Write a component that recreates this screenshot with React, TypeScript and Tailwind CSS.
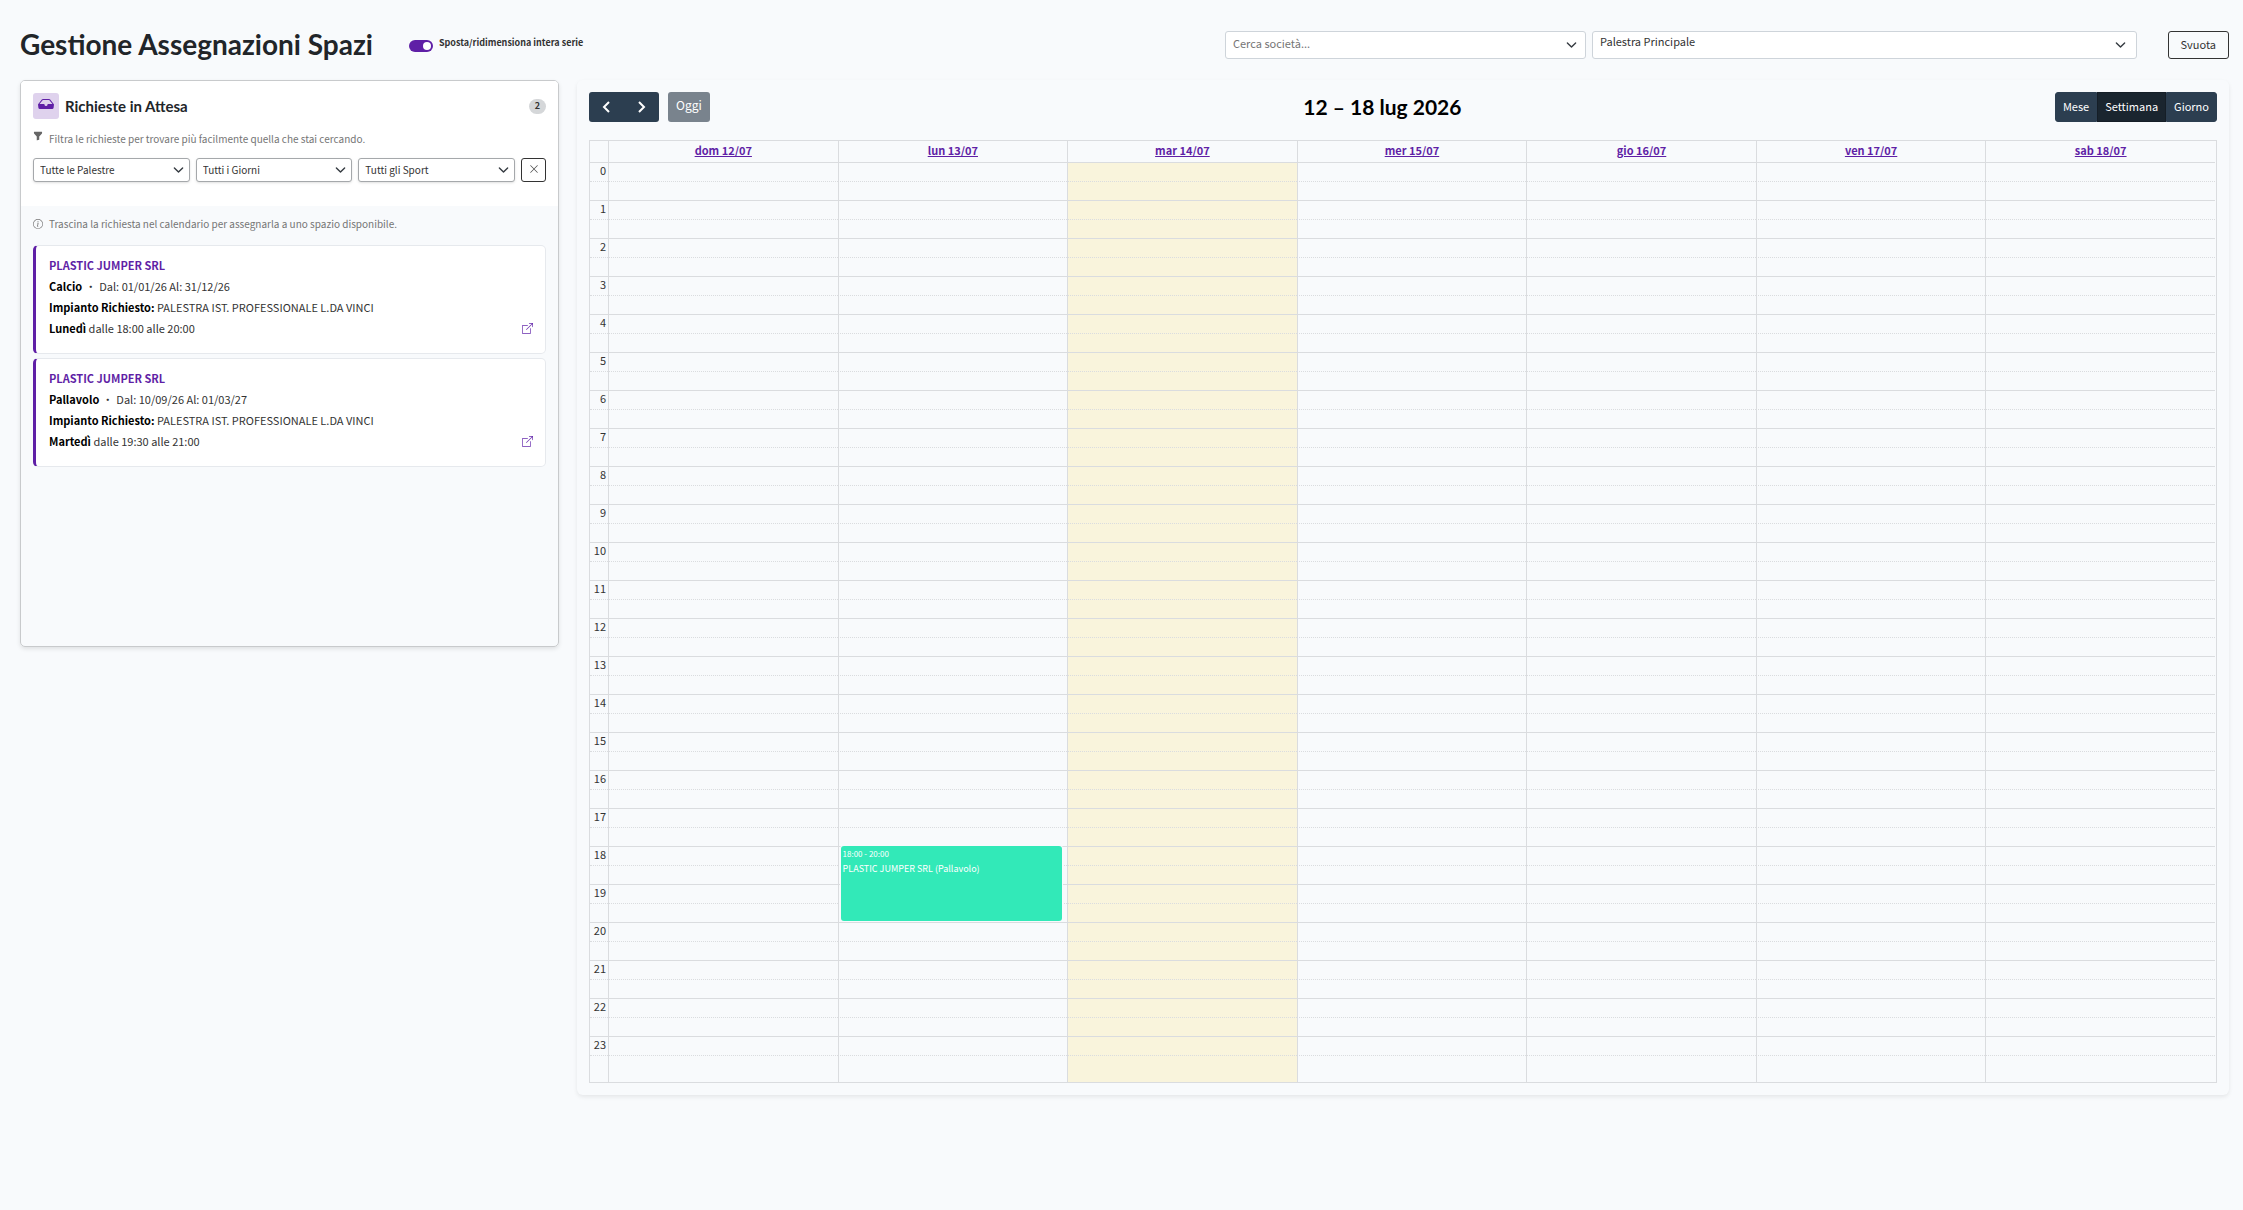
import { useState } from "react";
import {
  BsBoxArrowUpRight,
  BsFunnelFill,
  BsInboxFill,
  BsInfoCircle,
  BsXLg,
} from "react-icons/bs";
import clsx from "clsx";

const DAYS = [
  { label: "dom 12/07" },
  { label: "lun 13/07" },
  { label: "mar 14/07", today: true },
  { label: "mer 15/07" },
  { label: "gio 16/07" },
  { label: "ven 17/07" },
  { label: "sab 18/07" },
];

const SLOTS = Array.from({ length: 48 }, (_, i) => i);
const SLOT_HEIGHT = 19;

const EVENTS = [
  { id: 1, day: 1, slot: 36, slots: 4, time: "18:00 - 20:00", title: "PLASTIC JUMPER SRL (Pallavolo)" },
];

const REQUESTS = [
  {
    id: 1,
    club: "PLASTIC JUMPER SRL",
    sport: "Calcio",
    from: "01/01/26",
    to: "31/12/26",
    venue: "PALESTRA IST. PROFESSIONALE L.DA VINCI",
    day: "Lunedì",
    hours: "dalle 18:00 alle 20:00",
  },
  {
    id: 2,
    club: "PLASTIC JUMPER SRL",
    sport: "Pallavolo",
    from: "10/09/26",
    to: "01/03/27",
    venue: "PALESTRA IST. PROFESSIONALE L.DA VINCI",
    day: "Martedì",
    hours: "dalle 19:30 alle 21:00",
  },
];

const VIEWS = ["Mese", "Settimana", "Giorno"];

export default function App() {
  const [moveSeries, setMoveSeries] = useState(true);
  const [view, setView] = useState("Settimana");

  return (
    <div className="min-h-screen bg-slate-50 pt-[31px] pr-3.5 pb-8 pl-5 font-['Noto_Sans_CJK_SC',sans-serif] text-[#333]">
      <header className="flex h-7 items-center">
        <h1 className="pb-0.5 font-['Lato',sans-serif] text-[28px] leading-7 font-bold text-[#212529]">
          Gestione Assegnazioni Spazi
        </h1>
        <label className="ml-9 flex cursor-pointer items-center gap-1.5 text-[9px] leading-4 font-bold">
          <input
            type="checkbox"
            role="switch"
            checked={moveSeries}
            onChange={(e) => setMoveSeries(e.target.checked)}
            className="peer sr-only"
          />
          <span className="mt-0.5 flex h-3 w-6 items-center rounded-full bg-gray-300 px-0.5 peer-checked:justify-end peer-checked:bg-[#5f1fa6]">
            <span className="size-2 rounded-full bg-white" />
          </span>
          <span className="pb-1">Sposta/ridimensiona intera serie</span>
        </label>

        <div className="ml-auto flex w-[1004px] items-center">
          <div className="relative w-[361px]">
            <input
              type="text"
              aria-label="Cerca società"
              placeholder="Cerca società..."
              className="block h-7 w-full rounded-[3px] border border-[#ced4da] bg-white pr-8 pb-1 pl-[7px] text-[11px] placeholder:text-[#757575]"
            />
            <Chevron className="right-[9px] size-[11px]" />
          </div>
          <div className="relative ml-1.5 flex-1">
            <select
              aria-label="Palestra"
              className="block h-7 w-full appearance-none rounded-[3px] border border-[#ced4da] bg-white pr-8 pb-2 pl-[7px] text-[11px]"
            >
              <option>Palestra Principale</option>
            </select>
            <Chevron className="right-[11px] size-[11px]" />
          </div>
          <button
            type="button"
            className="ml-[31px] h-7 rounded-[3px] border border-[#333] px-3 pb-0.5 text-[11px] leading-4 hover:bg-gray-100"
          >
            Svuota
          </button>
        </div>
      </header>

      <main className="mt-[21px] flex items-start gap-[18px]">
        <RequestsPanel />
        <section className="flex-1 rounded-md px-3 pt-3 pb-3 shadow-[0_2px_4px_rgba(0,0,0,0.08)]">
          <div className="flex h-[30px] items-center justify-between">
            <div className="flex gap-[9px]">
              <div className="flex">
                <NavButton label="Settimana precedente" path="M10 3 5 8l5 5" className="rounded-l-[3px]" />
                <NavButton label="Settimana successiva" path="m5 3 5 5-5 5" className="rounded-r-[3px]" />
              </div>
              <button
                type="button"
                disabled
                className="h-[30px] rounded-[3px] bg-[#79838d] px-2 pb-1 text-[12px] text-white"
              >
                Oggi
              </button>
            </div>
            <h2 className="font-['Lato',sans-serif] text-[21px] leading-6 font-bold text-black">
              12 – 18 lug 2026
            </h2>
            <div className="flex justify-end">
              {VIEWS.map((name) => (
                <button
                  key={name}
                  type="button"
                  onClick={() => setView(name)}
                  className={clsx(
                    "h-[30px] border px-[7px] pb-0.5 text-[11px] text-white first:rounded-l-[3px] last:rounded-r-[3px]",
                    name === view ? "border-[#151e27] bg-[#1a252f]" : "border-[#2c3e50] bg-[#2c3e50]",
                  )}
                >
                  {name}
                </button>
              ))}
            </div>
          </div>
          <WeekGrid />
        </section>
      </main>
    </div>
  );
}

function RequestsPanel() {
  return (
    <section className="flex h-[567px] w-[539px] shrink-0 flex-col overflow-hidden rounded-[5px] border border-[#c8cacc] shadow-[0_2px_4px_rgba(0,0,0,0.1)]">
      <div className="h-[125px] bg-white px-3 pt-3">
        <div className="flex items-center">
          <span className="flex h-[26px] w-[26px] justify-center rounded-[3px] bg-[#dfd2ed] pt-[3px]">
            <BsInboxFill className="size-4 text-[#5f1fa6]" />
          </span>
          <h2 className="ml-1.5 font-['Lato',sans-serif] text-[15px] leading-5 font-bold text-[#212529]">
            Richieste in Attesa
          </h2>
          <span className="ml-auto rounded-full bg-[#d5d7d9] px-1.5 pb-px text-[9px] leading-[14px] font-bold">
            2
          </span>
        </div>
        <p className="mt-3 flex h-4 gap-1.5 text-[10px] leading-4 text-[#757575]">
          <BsFunnelFill className="size-2.5 text-[#666]" />
          Filtra le richieste per trovare più facilmente quella che stai cercando.
        </p>
        <div className="mt-[11px] flex gap-1.5">
          <FilterSelect label="Palestra" value="Tutte le Palestre" />
          <FilterSelect label="Giorno" value="Tutti i Giorni" />
          <FilterSelect label="Sport" value="Tutti gli Sport" />
          <button
            type="button"
            aria-label="Azzera filtri"
            className="flex h-6 w-[25px] items-center justify-center rounded-[3px] border border-[#333] bg-white pb-0.5 text-[#444]"
          >
            <BsXLg className="size-2.5" />
          </button>
        </div>
      </div>
      <div className="flex-1 overflow-y-auto px-3 pt-2.5">
        <p className="flex gap-1.5 text-[10px] leading-4 text-[#757575]">
          <BsInfoCircle className="mt-[3px] size-2.5" />
          Trascina la richiesta nel calendario per assegnarla a uno spazio disponibile.
        </p>
        <ul className="mt-[13px] flex flex-col gap-1">
          {REQUESTS.map((r) => (
            <li
              key={r.id}
              className="h-[109px] cursor-grab rounded-[5px] border border-l-3 border-[#e6e9ed] border-l-[#5f1fa6] bg-white pt-[9px] pr-3 pl-[13px] text-[11px] leading-[21px]"
            >
              <h3 className="font-bold text-[#5f1fa6]">{r.club}</h3>
              <p>
                <strong className="text-black">{r.sport}</strong>
                <span className="mx-[3px]">·</span>
                Dal: {r.from} Al: {r.to}
              </p>
              <p>
                <strong className="text-black">Impianto Richiesto:</strong> {r.venue}
              </p>
              <div className="flex items-center justify-between">
                <p>
                  <strong className="text-black">{r.day}</strong> {r.hours}
                </p>
                <a href="#richiesta" aria-label="Apri richiesta" className="text-[#6a2fae]">
                  <BsBoxArrowUpRight className="size-[11px]" />
                </a>
              </div>
            </li>
          ))}
        </ul>
      </div>
    </section>
  );
}

function WeekGrid() {
  return (
    <div className="mt-[18px] border border-[#dadcdf] pr-px">
      <table className="w-full table-fixed border-separate border-spacing-0">
        <thead>
          <tr className="h-[21px]">
            <th className="w-[18px] p-0" aria-label="Ora" />
            {DAYS.map((d) => (
              <th key={d.label} className="border-l border-[#dadcdf] p-0 pb-1 text-[11px] leading-4">
                <a href="#giorno" className="text-[#5f1fa6] underline">
                  {d.label}
                </a>
              </th>
            ))}
          </tr>
        </thead>
        <tbody>
          {SLOTS.map((slot) => {
            const half = slot % 2 === 1;
            return (
              <tr key={slot} className={slot === 47 ? "h-[27px]" : "h-[19px]"}>
                <td
                  className={clsx(
                    "border-t border-[#dadcdf] p-0 pr-0.5 text-right align-top text-[11px] leading-3.5",
                    half && "border-dotted",
                  )}
                >
                  {half ? null : slot / 2}
                </td>
                {DAYS.map((d, day) => (
                  <td
                    key={d.label}
                    className={clsx(
                      "relative border-t border-l border-[#dadcdf] p-0",
                      half && "[border-top-style:dotted]",
                      d.today && "bg-[#f9f4dc]",
                    )}
                  >
                    {EVENTS.filter((e) => e.day === day && e.slot === slot).map((e) => (
                      <div
                        key={e.id}
                        className="absolute -top-px right-[5px] left-0.5 z-10 rounded-[3px] bg-[#32e9b8] px-0.5 pt-0.5 text-white ring-1 ring-slate-50"
                        style={{ height: e.slots * SLOT_HEIGHT - 1 }}
                      >
                        <div className="text-[8px] leading-3">{e.time}</div>
                        <div className="text-[9px] leading-[18px]">{e.title}</div>
                      </div>
                    ))}
                  </td>
                ))}
              </tr>
            );
          })}
        </tbody>
      </table>
    </div>
  );
}

function FilterSelect({ label, value }: { label: string; value: string }) {
  return (
    <div className="relative flex-1">
      <select
        aria-label={label}
        className="block h-6 w-full appearance-none rounded-[3px] border border-[#a5a8ab] bg-white pr-6 pb-0.5 pl-1.5 text-[10px] shadow-sm"
      >
        <option>{value}</option>
      </select>
      <Chevron className="right-1.5 size-[11px]" />
    </div>
  );
}

function Chevron({ className }: { className: string }) {
  return (
    <svg
      viewBox="0 0 16 16"
      fill="none"
      stroke="#343a40"
      strokeWidth="2"
      strokeLinecap="round"
      strokeLinejoin="round"
      className={clsx("pointer-events-none absolute top-1/2 -translate-y-1/2", className)}
    >
      <path d="m2 5 6 6 6-6" />
    </svg>
  );
}

function NavButton({ label, path, className }: { label: string; path: string; className: string }) {
  return (
    <button
      type="button"
      aria-label={label}
      className={clsx("flex h-[30px] w-[35px] items-center justify-center bg-[#2c3e50]", className)}
    >
      <svg viewBox="0 0 16 16" fill="none" stroke="white" strokeWidth="2" className="size-4">
        <path d={path} />
      </svg>
    </button>
  );
}
